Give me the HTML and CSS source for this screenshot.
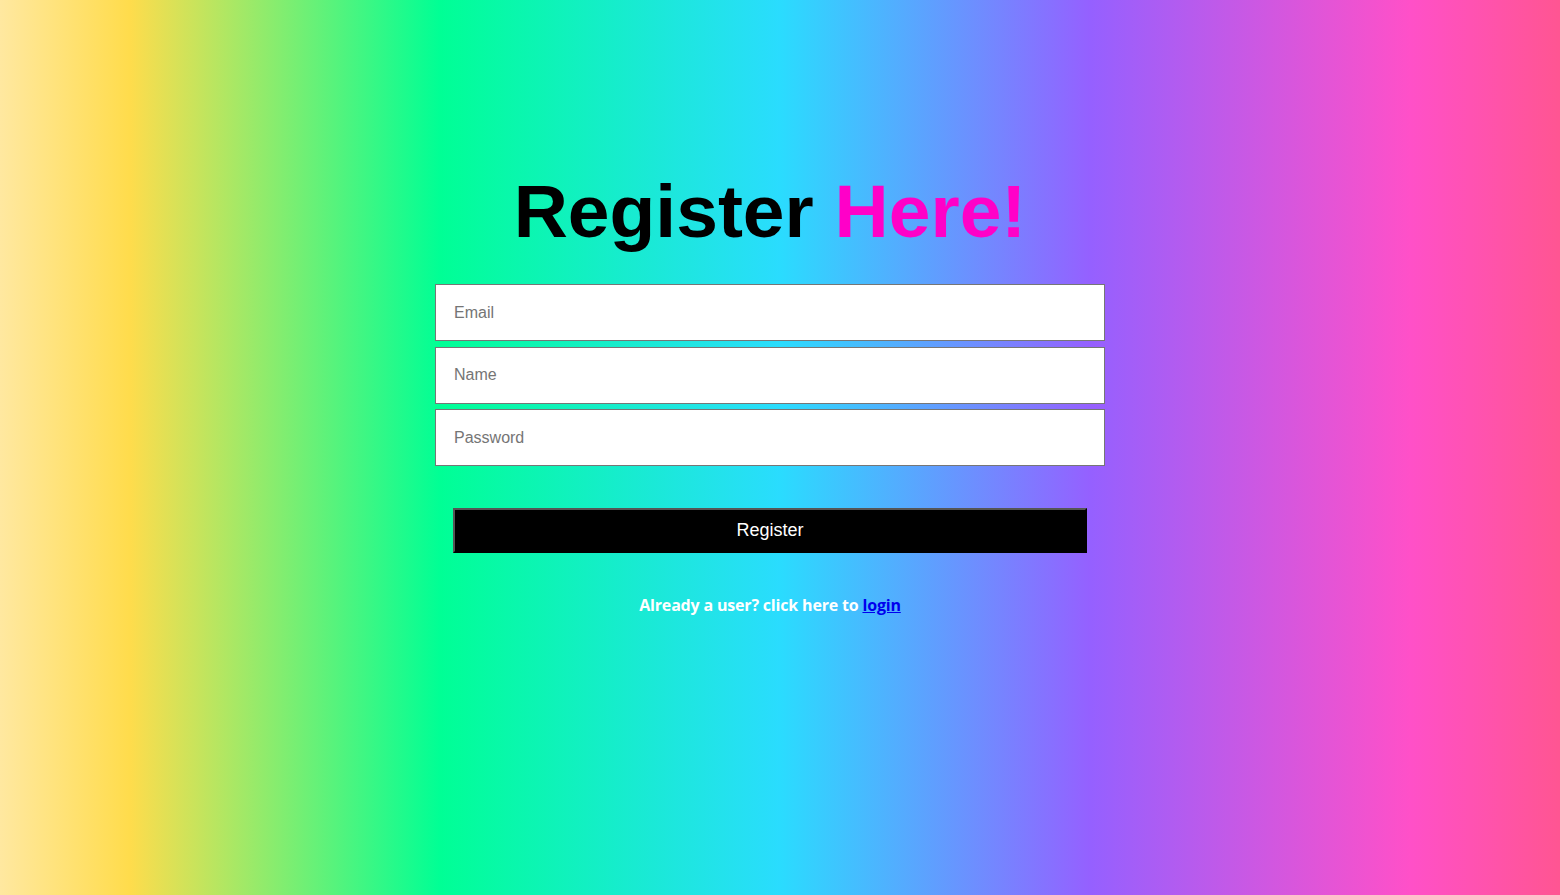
FILE: index.html
```html
<!DOCTYPE html>
<html lang="en">
<head>
<meta charset="utf-8">
<title>Register</title>
<link rel="stylesheet" href="styles.css">
</head>
<body>
<main class="page">
  <section class="card">
    <h1 class="title">Register <span class="accent">Here!</span></h1>
    <form class="form">
      <input class="field" type="email" placeholder="Email">
      <input class="field" type="text" placeholder="Name">
      <input class="field" type="password" placeholder="Password">
      <button class="btn" type="button">Register</button>
    </form>
    <p class="note">Already a user? click here to <a class="link" href="#">login</a></p>
  </section>
</main>
</body>
</html>
```

FILE: styles.css
```css
* { box-sizing: border-box; }
html, body { margin: 0; height: 100%; }
body {
  background: linear-gradient(to right,
    #ffe8a0 0%,
    #ffdc4c 8.3%,
    #00ff95 28.2%,
    #2adcfe 50%,
    #9560ff 69.9%,
    #ff50c8 90.4%,
    #ff5592 100%);
  font-family: "Liberation Sans", Arial, sans-serif;
}
.page {
  min-height: 100%;
  display: flex;
  justify-content: center;
  padding-right: 20px;
}
.card {
  width: 670px;
  display: flex;
  flex-direction: column;
  align-items: center;
  padding-top: 166px;
}
.title {
  margin: 0 0 28px;
  font-size: 75px;
  font-weight: 700;
  line-height: 90px;
  color: #000;
}
.accent { color: #ff00c8; }
.form {
  width: 670px;
  display: flex;
  flex-direction: column;
  align-items: center;
  gap: 5.5px;
}
.field {
  width: 670px;
  height: 57px;
  margin: 0;
  border: 1px solid #767676;
  background: #fff;
  padding: 0 18px;
  font-family: "Liberation Sans", Arial, sans-serif;
  font-size: 16px;
  color: #333;
  outline: none;
}
.field::placeholder { color: #757575; }
.btn {
  margin-top: 36px;
  width: 634px;
  height: 45px;
  background: #000;
  color: #fff;
  font-family: "Liberation Sans", Arial, sans-serif;
  font-size: 18px;
  border-style: solid;
  border-width: 2px;
  border-color: #555 #000 #000 #555;
  padding: 0;
  cursor: pointer;
}
.note {
  margin: 41px 0 0;
  font-family: "Open Sans", sans-serif;
  font-weight: 700;
  font-size: 16px;
  color: #fff;
  letter-spacing: -0.18px;
}
.link { color: #0000ee; }
```
